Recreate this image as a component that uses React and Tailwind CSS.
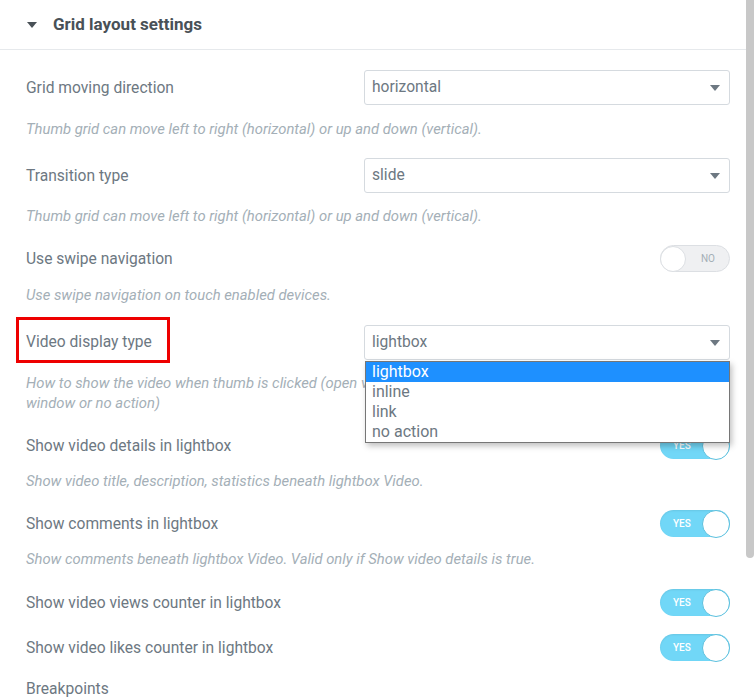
import React from 'react';

const Caret = ({ className = '' }) => (
  <svg width="10" height="6" viewBox="0 0 10 6" className={className}>
    <path d="M0 0 L10 0 L5 6 Z" fill="currentColor" />
  </svg>
);

const Select = ({ value }) => (
  <div className="w-[366px] h-[35px] border border-[#d5dadf] rounded-[3px] bg-white flex items-center justify-between pl-[7px] pr-[9px] text-[15.6px] text-[#6d7882]">
    <span>{value}</span>
    <Caret className="text-[#6d7882]" />
  </div>
);

const Toggle = ({ on }) =>
  on ? (
    <div className="w-[70px] h-[27px] rounded-full bg-[#71d7f7] flex items-center justify-between pl-[13px] pr-0 shadow-[inset_0_1px_2px_rgba(0,0,0,0.08)]">
      <span className="text-[10px] font-medium text-white">YES</span>
      <span className="w-[28px] h-[28px] rounded-full bg-white border border-[#5bc0de]" />
    </div>
  ) : (
    <div className="w-[70px] h-[27px] rounded-full bg-[#eff0f2] border border-[#dcdfe3] flex items-center justify-between pr-[14px]">
      <span className="w-[26px] h-[26px] rounded-full bg-white border border-[#dcdfe3] -ml-px" />
      <span className="text-[10px] text-[#a4afb7]">NO</span>
    </div>
  );

const Desc = ({ children, className = '' }) => (
  <p className={`text-[14.8px] leading-[20px] italic text-[#a4afb7] ${className}`}>{children}</p>
);

const Label = ({ children }) => <span className="text-[15.6px] text-[#6d7882] pt-[2px]">{children}</span>;

export default function App() {
  return (
    <div className="w-[755px] h-[699px] overflow-hidden bg-white flex" style={{ fontFamily: 'Roboto, "Liberation Sans", sans-serif' }}>
      <div className="w-[746px] flex flex-col">
        <div className="h-[50px] border-b border-[#e6e9ec] flex items-center pl-[27px] gap-[16px] shrink-0">
          <Caret className="text-[#495157]" />
          <span className="text-[17px] font-bold text-[#495157] mt-[1px]">Grid layout settings</span>
        </div>

        <div className="pl-[26px] pr-[16px] flex flex-col">
          <div className="mt-[20px] h-[35px] flex items-center justify-between">
            <Label>Grid moving direction</Label>
            <Select value="horizontal" />
          </div>
          <Desc className="mt-[14px]">Thumb grid can move left to right (horizontal) or up and down (vertical).</Desc>

          <div className="mt-[19px] h-[35px] flex items-center justify-between">
            <Label>Transition type</Label>
            <Select value="slide" />
          </div>
          <Desc className="mt-[13px]">Thumb grid can move left to right (horizontal) or up and down (vertical).</Desc>

          <div className="mt-[19px] h-[27px] flex items-center justify-between">
            <Label>Use swipe navigation</Label>
            <Toggle on={false} />
          </div>
          <Desc className="mt-[13px]">Use swipe navigation on touch enabled devices.</Desc>

          <div className="mt-[20px] h-[35px] flex items-center justify-between relative">
            <div className="relative">
              <Label>Video display type</Label>
              <div className="absolute -left-[10px] -top-[13px] w-[154px] h-[46px] border-[3px] border-[#ee0000]" />
            </div>
            <div className="relative">
              <Select value="lightbox" />
              <div className="absolute left-px top-[36px] w-[365px] bg-white border border-[#767676] shadow-[2px_3px_6px_rgba(0,0,0,0.25)] z-10 text-[16px] text-[#6d7882] leading-[20px]">
                <div className="bg-[#1e90ff] text-white pl-[6px]">lightbox</div>
                <div className="pl-[6px]">inline</div>
                <div className="pl-[6px]">link</div>
                <div className="pl-[6px]">no action</div>
              </div>
            </div>
          </div>
          <Desc className="mt-[13px]">
            How to show the video when thumb is clicked (open video in lightbox, play it inline, open a link in new
            <br />
            window or no action)
          </Desc>

          <div className="mt-[19px] h-[27px] flex items-center justify-between">
            <Label>Show video details in lightbox</Label>
            <Toggle on />
          </div>
          <Desc className="mt-[12px]">Show video title, description, statistics beneath lightbox Video.</Desc>

          <div className="mt-[19px] h-[27px] flex items-center justify-between">
            <Label>Show comments in lightbox</Label>
            <Toggle on />
          </div>
          <Desc className="mt-[12px]">Show comments beneath lightbox Video. Valid only if Show video details is true.</Desc>

          <div className="mt-[20px] h-[27px] flex items-center justify-between">
            <Label>Show video views counter in lightbox</Label>
            <Toggle on />
          </div>

          <div className="mt-[18px] h-[27px] flex items-center justify-between">
            <Label>Show video likes counter in lightbox</Label>
            <Toggle on />
          </div>

          <div className="mt-[18px] h-[20px] flex items-center">
            <Label>Breakpoints</Label>
          </div>
        </div>
      </div>
      <div className="w-[9px] flex flex-col">
        <div className="w-[8px] h-[558px] bg-[#c8c8c8] rounded-b-full" />
      </div>
    </div>
  );
}
